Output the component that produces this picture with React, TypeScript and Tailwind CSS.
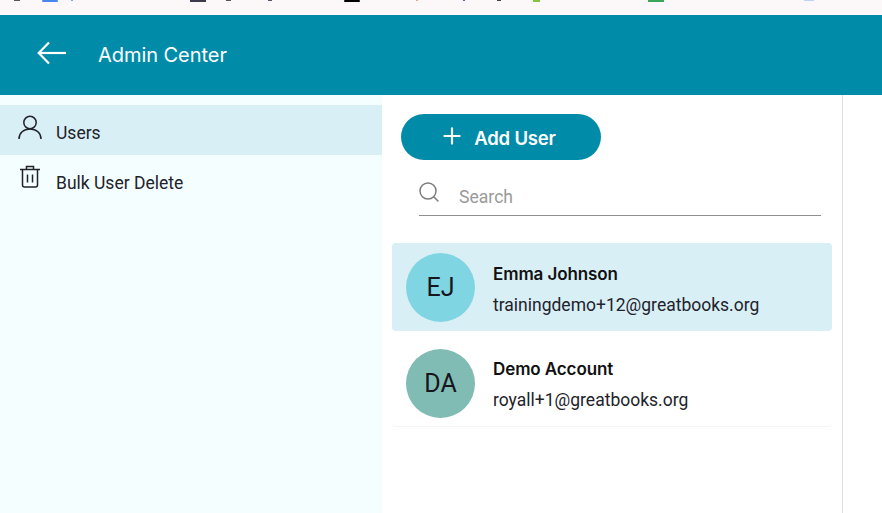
import React from 'react';
import { Plus, Search } from 'lucide-react';

const users = [
  { initials: 'EJ', name: 'Emma Johnson', email: 'trainingdemo+12@greatbooks.org', avatar: 'bg-[#7fd5e2]', selected: true },
  { initials: 'DA', name: 'Demo Account', email: 'royall+1@greatbooks.org', avatar: 'bg-[#80bcb3]', selected: false },
];

// cropped bookmark icons along the very top of the window
function BookmarkStrip() {
  return (
    <svg width="882" height="15" className="block">
      <rect x="14" y="0" width="6" height="1" fill="#555" />
      <rect x="42" y="0" width="16" height="2" rx="1" fill="#4a86f0" />
      <rect x="71" y="0" width="2" height="1" fill="#7ab0d8" />
      <rect x="190" y="0" width="16" height="2" fill="#3c3a4c" />
      <rect x="226" y="0" width="5" height="1" fill="#555" />
      <rect x="268" y="0" width="4" height="1" fill="#556" />
      <rect x="344" y="0" width="16" height="2" rx="1" fill="#000" />
      <rect x="416" y="0" width="2" height="1" fill="#f0a090" />
      <rect x="463" y="0" width="2" height="1" fill="#5560a0" />
      <rect x="497" y="0" width="4" height="1" fill="#444" />
      <rect x="533" y="0" width="7" height="2" fill="#84c441" />
      <rect x="648" y="0" width="16" height="2" fill="#3aa757" />
      <rect x="804" y="0" width="10" height="1" fill="#bcd2f8" />
    </svg>
  );
}

export default function App() {
  return (
    <div className="h-[513px] w-[882px] overflow-hidden bg-white font-['Roboto','Liberation_Sans',sans-serif] text-[#22222a]">
      <div className="h-[15px] bg-[#fcf7f9]">
        <BookmarkStrip />
      </div>

      <header className="flex h-[80px] items-center bg-[#008ca9] text-white">
        <svg width="30" height="24" viewBox="0 0 30 24" fill="none" stroke="currentColor" strokeWidth="2.2" className="ml-[37px] mb-[5px]">
          <path d="M29 12H2" />
          <path d="M12 1.500 1.700 12 12 22.500" />
        </svg>
        <h1 className="ml-[31px] font-['Inter','Roboto',sans-serif] text-[20px] leading-none font-normal tracking-[-0.05px]">Admin Center</h1>
      </header>

      <div className="flex h-[418px]">
        <aside className="w-[382px] shrink-0 bg-[#f4feff] pt-[10px]">
          <div className="flex h-[50px] items-start bg-[#d9eff6] pl-[18px]">
            <svg width="24" height="26" viewBox="0 0 24 26" fill="none" stroke="#22222a" strokeWidth="1.500" className="mt-[10px]">
              <circle cx="12" cy="7.500" r="6.200" />
              <path d="M1 24c0-6 4.500-10 11-10s11 4 11 10" />
            </svg>
            <span className="mt-[18px] ml-[14px] text-[17.500px] leading-[20px]">Users</span>
          </div>
          <div className="flex h-[50px] items-start pl-[20px]">
            <svg width="20" height="24" viewBox="0 0 20 24" fill="none" stroke="#22222a" strokeWidth="1.500" className="mt-[10px]">
              <path d="M0 4.500h20" />
              <path d="M6.500 4V1.500h7V4" />
              <path d="M2.500 4.500v15.500a2 2 0 0 0 2 2h11a2 2 0 0 0 2-2V4.500" />
              <path d="M7.500 9.500v8M12.500 9.500v8" />
            </svg>
            <span className="mt-[18px] ml-[16px] text-[17.500px] leading-[20px]">Bulk User Delete</span>
          </div>
        </aside>

        <main className="w-[461px] shrink-0 border-r border-[#dfdfdf] pt-[19px] pl-[10px]">
          <button className="ml-[9px] flex h-[46px] w-[200px] items-center justify-center gap-[9px] rounded-full bg-[#008ca9] font-['Inter','Roboto',sans-serif] text-[18.500px] font-semibold tracking-[-0.2px] text-white">
            <Plus size={26} strokeWidth={2} className="-ml-[7px] -mt-[2px]" />
            <span className="mt-[4px]">Add User</span>
          </button>

          <div className="mt-[13px] ml-[27px] flex h-[43px] w-[402px] items-center border-b border-[#8f8f8f]">
            <Search size={24} strokeWidth={1.500} className="-ml-[2px] -mt-[4px] text-[#7d7d7d]" />
            <span className="mt-[6px] ml-[18px] text-[17.600px] leading-[20px] text-[#9a9a9a]">Search</span>
          </div>

          <ul className="mt-[27px] w-[440px]">
            {users.map((u) => (
              <li
                key={u.initials}
                className={`flex items-center rounded-[4px] pl-[14px] ${u.selected ? 'h-[88px] bg-[#d9eff6]' : 'mt-[10px] h-[86px] border-b border-[#f5f5f5] bg-white'}`}
              >
                <div className={`flex h-[69px] w-[69px] shrink-0 items-center justify-center rounded-full pt-[1px] text-[25px] text-[#16161c] ${u.avatar}`}>
                  {u.initials}
                </div>
                <div className={`ml-[18px] ${u.selected ? 'mt-[4px]' : 'mt-[2px]'}`}>
                  <p className="font-['Inter','Roboto',sans-serif] text-[17px] leading-[20px] font-semibold tracking-[-0.1px] text-[#111]">{u.name}</p>
                  <p className="mt-[11px] text-[17.500px] leading-[20px]">{u.email}</p>
                </div>
              </li>
            ))}
          </ul>
        </main>
      </div>
    </div>
  );
}
